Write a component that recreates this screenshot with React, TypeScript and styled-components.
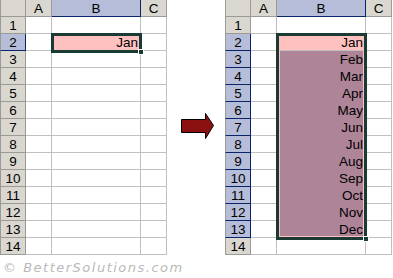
import React from "react";
import styled, { createGlobalStyle } from "styled-components";

const GlobalStyle = createGlobalStyle`
  body {
    margin: 0;
    background: #ffffff;
    font-family: "Liberation Sans", Arial, sans-serif;
  }
`;

const MONTHS = ["Jan", "Feb", "Mar", "Apr", "May", "Jun", "Jul", "Aug", "Sep", "Oct", "Nov", "Dec"];
const ROWS = Array.from({ length: 14 }, (_, i) => i + 1);
const COLS = ["A", "B", "C"];

interface iSheet {
  values: Record<number, string>;
  lastRow: number;
}

const Sheet: React.FC<iSheet> = ({ values, lastRow }) => {
  return (
    <Grid>
      <Corner />
      {COLS.map((c) => (
        <ColHead key={c} sel={c === "B"}>
          {c}
        </ColHead>
      ))}
      {ROWS.map((r) => {
        const inSel = r >= 2 && r <= lastRow;
        const fill = r === 2 ? "active" : inSel ? "range" : "none";
        return (
          <React.Fragment key={r}>
            <RowHead sel={inSel}>{r}</RowHead>
            <Cell fill="none" />
            <Cell fill={fill}>{values[r] || ""}</Cell>
            <Cell fill="none" />
          </React.Fragment>
        );
      })}
      <Selection style={{ height: (lastRow - 1) * 17 + 3 }}>
        <Handle />
      </Selection>
    </Grid>
  );
};

const App: React.FC = () => {
  const after: Record<number, string> = {};
  MONTHS.forEach((m, i) => (after[i + 2] = m));
  return (
    <Page>
      <GlobalStyle />
      <Row>
        <Sheet values={{ 2: "Jan" }} lastRow={2} />
        <ArrowBox>
          <svg width="34" height="27" viewBox="0 0 34 27">
            <polygon
              points="0.5,6.5 24.5,6.5 24.5,0.5 32.5,12.5 24.5,25.5 24.5,19.5 0.5,19.5"
              fill="#8b1111"
              stroke="#000"
              strokeWidth="1"
            />
          </svg>
        </ArrowBox>
        <Sheet values={after} lastRow={13} />
      </Row>
      <Watermark>© BetterSolutions.com</Watermark>
    </Page>
  );
};
export default App;

const Page = styled.div`
  width: 393px;
  height: 278px;
  overflow: hidden;
`;
const Row = styled.div`
  display: flex;
  align-items: flex-start;
`;
const Grid = styled.div`
  position: relative;
  display: grid;
  grid-template-columns: 26px 26px 89px 26px;
  grid-auto-rows: 17px;
  width: 167px;
  font-size: 13.5px;
  color: #000;
`;
const Corner = styled.div`
  box-sizing: border-box;
  background: #dad7d0;
  border-right: 1px solid #9c9a94;
  border-bottom: 1px solid #9c9a94;
  border-left: 1px solid #9c9a94;
`;
const ColHead = styled.div<{ sel: boolean }>`
  box-sizing: border-box;
  display: flex;
  align-items: center;
  justify-content: center;
  background: ${(p) => (p.sel ? "#b6bdd8" : "#dad7d0")};
  border-right: 1px solid ${(p) => (p.sel ? "#0a246a" : "#9c9a94")};
  border-bottom: 1px solid ${(p) => (p.sel ? "#0a246a" : "#9c9a94")};
`;
const RowHead = styled.div<{ sel: boolean }>`
  box-sizing: border-box;
  display: flex;
  align-items: center;
  justify-content: center;
  background: ${(p) => (p.sel ? "#b6bdd8" : "#dad7d0")};
  border-left: 1px solid #9c9a94;
  border-right: 1px solid ${(p) => (p.sel ? "#0a246a" : "#9c9a94")};
  border-bottom: 1px solid ${(p) => (p.sel ? "#0a246a" : "#9c9a94")};
`;
const fills: Record<string, string> = {
  none: "#ffffff",
  active: "#ffc0c0",
  range: "#ae8499",
};
const Cell = styled.div<{ fill: string }>`
  box-sizing: border-box;
  display: flex;
  align-items: center;
  justify-content: flex-end;
  padding-right: 2px;
  background: ${(p) => fills[p.fill]};
  border-right: 1px solid #c0c0c0;
  border-bottom: 1px solid ${(p) => (p.fill === "range" ? "#ae8499" : "#c0c0c0")};
`;
const Selection = styled.div`
  position: absolute;
  left: 51px;
  top: 33px;
  width: 91px;
  box-sizing: border-box;
  border: 3px solid #1a3b34;
  box-shadow: inset 0 0 0 1px #ffc0c0;
  pointer-events: none;
`;
const Handle = styled.div`
  position: absolute;
  right: -5px;
  bottom: -5px;
  width: 4px;
  height: 4px;
  background: #1a3b34;
  border: 1px solid #ffffff;
`;
const ArrowBox = styled.div`
  width: 58px;
  height: 255px;
  display: flex;
  align-items: center;
  padding-left: 14px;
  box-sizing: border-box;
  svg {
    margin-top: -3px;
  }
`;
const Watermark = styled.div`
  margin: 5px 0 0 3px;
  font-family: "DejaVu Sans", sans-serif;
  font-style: italic;
  font-size: 13px;
  letter-spacing: 1.5px;
  color: #b9b9b9;
`;
